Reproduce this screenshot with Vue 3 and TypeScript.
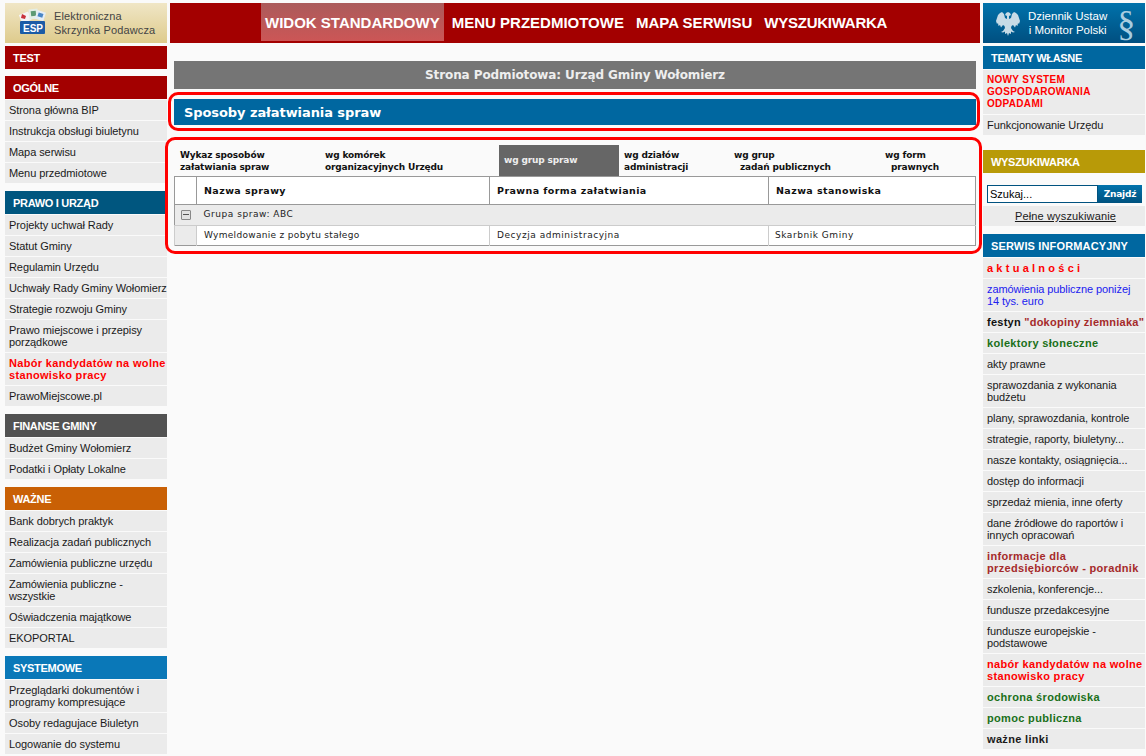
<script setup lang="ts">
interface Item { text: string; cls?: string }
interface Section { title: string; color: string; items: Item[] }

const leftSections: Section[] = [
  { title: 'TEST', color: '#a30000', items: [] },
  { title: 'OGÓLNE', color: '#a30000', items: [
    { text: 'Strona główna BIP' }, { text: 'Instrukcja obsługi biuletynu' }, { text: 'Mapa serwisu' }, { text: 'Menu przedmiotowe' },
  ] },
  { title: 'PRAWO I URZĄD', color: '#00567f', items: [
    { text: 'Projekty uchwał Rady' }, { text: 'Statut Gminy' }, { text: 'Regulamin Urzędu' }, { text: 'Uchwały Rady Gminy Wołomierz' },
    { text: 'Strategie rozwoju Gminy' }, { text: 'Prawo miejscowe i przepisy porządkowe' },
    { text: 'Nabór kandydatów na wolne stanowisko pracy', cls: 'red bold' }, { text: 'PrawoMiejscowe.pl' },
  ] },
  { title: 'FINANSE GMINY', color: '#525252', items: [
    { text: 'Budżet Gminy Wołomierz' }, { text: 'Podatki i Opłaty Lokalne' },
  ] },
  { title: 'WAŻNE', color: '#c96005', items: [
    { text: 'Bank dobrych praktyk' }, { text: 'Realizacja zadań publicznych' }, { text: 'Zamówienia publiczne urzędu' },
    { text: 'Zamówienia publiczne - wszystkie' }, { text: 'Oświadczenia majątkowe' }, { text: 'EKOPORTAL' },
  ] },
  { title: 'SYSTEMOWE', color: '#0a78b8', items: [
    { text: 'Przeglądarki dokumentów i programy kompresujące' }, { text: 'Osoby redagujace Biuletyn' }, { text: 'Logowanie do systemu' },
  ] },
]

const infoItems: Item[] = [
  { text: 'a k t u a l n o ś c i', cls: 'red bold spaced' },
  { text: 'zamówienia publiczne poniżej 14 tys. euro', cls: 'blue' },
  { text: 'festyn', cls: 'bold festyn' },
  { text: 'kolektory słoneczne', cls: 'green bold' },
  { text: 'akty prawne' },
  { text: 'sprawozdania z wykonania budżetu' },
  { text: 'plany, sprawozdania, kontrole' },
  { text: 'strategie, raporty, biuletyny...' },
  { text: 'nasze kontakty, osiągnięcia...' },
  { text: 'dostęp do informacji' },
  { text: 'sprzedaż mienia, inne oferty' },
  { text: 'dane źródłowe do raportów i innych opracowań' },
  { text: 'informacje dla przedsiębiorców - poradnik', cls: 'brown bold' },
  { text: 'szkolenia, konferencje...' },
  { text: 'fundusze przedakcesyjne' },
  { text: 'fundusze europejskie - podstawowe' },
  { text: 'nabór kandydatów na wolne stanowisko pracy', cls: 'red bold' },
  { text: 'ochrona środowiska', cls: 'green bold' },
  { text: 'pomoc publiczna', cls: 'green bold' },
  { text: 'ważne linki', cls: 'bold' },
]

const nav = ['WIDOK STANDARDOWY', 'MENU PRZEDMIOTOWE', 'MAPA SERWISU', 'WYSZUKIWARKA']
const tabs = [
  { lines: ['Wykaz sposobów', 'załatwiania spraw'], w: 145, pad: 6 },
  { lines: ['wg komórek', 'organizacyjnych Urzędu'], w: 180, pad: 6 },
  { lines: ['wg grup spraw'], w: 120, pad: 5, active: true },
  { lines: ['wg działów', 'administracji'], w: 110, pad: 5 },
  { lines: ['wg grup', '\u00a0 zadań publicznych'], w: 150, pad: 5 },
  { lines: ['wg form', '\u00a0 prawnych'], w: 97, pad: 6 },
]
const eagleHalf = 'M13 2L11 3L10 5L12 6L12 9L10 8L9 4L7 2L5 3L3 5L2 8L1 11L2 14L3 13L3.5 16L5 15L6 17.5L8 15L9.5 16L10 18L8 21L6 22L8 22.5L10 21.5L10 24L12 23L13 26Z'
</script>

<template>
  <div class="page">
    <aside class="side">
      <div class="esp">
        <svg class="esp-logo" width="27" height="26" viewBox="0 0 27 26">
          <rect x="1" y="5" width="10" height="9" fill="#f4f4f4" transform="rotate(-22 6 9)" />
          <path d="M3 6l4 2-1 3-4-1z" fill="#c8323a" />
          <rect x="10" y="1" width="9" height="10" fill="#e4eee6" transform="rotate(-6 14 6)" />
          <rect x="12" y="3" width="5" height="5" fill="#5d9a74" transform="rotate(-6 14 6)" />
          <rect x="17" y="3" width="9" height="9" fill="#e4edf6" transform="rotate(18 21 7)" />
          <rect x="19" y="5" width="5" height="4" fill="#4a86c6" transform="rotate(18 21 7)" />
          <rect x="1" y="13" width="25" height="13" rx="1" fill="#1c5ca6" />
          <text x="14" y="23.5" class="esp-text" text-anchor="middle">ESP</text>
        </svg>
        <div class="esp-label">Elektroniczna<br />Skrzynka Podawcza</div>
      </div>
      <section v-for="s in leftSections" :key="s.title" class="box">
        <h3 class="box-title" :style="{ background: s.color }">{{ s.title }}</h3>
        <a v-for="i in s.items" :key="i.text" class="item" :class="i.cls">{{ i.text }}</a>
      </section>
    </aside>

    <main class="center">
      <nav class="topnav">
        <a v-for="(n, idx) in nav" :key="n" class="nav-link" :class="{ on: idx === 0 }">{{ n }}</a>
      </nav>
      <div class="content">
        <div class="subject">Strona Podmiotowa: Urząd Gminy Wołomierz</div>
        <h1 class="heading">Sposoby załatwiania spraw</h1>
        <div class="tabs">
          <div
            v-for="t in tabs"
            :key="t.lines[0]"
            class="tab"
            :class="{ active: t.active }"
            :style="{ width: t.w + 'px', paddingLeft: t.pad + 'px' }"
          >
            <div v-for="l in t.lines" :key="l">{{ l }}</div>
          </div>
        </div>
        <table class="grid">
          <colgroup>
            <col style="width: 22px" />
            <col style="width: 293px" />
            <col style="width: 279px" />
            <col />
          </colgroup>
          <thead>
            <tr>
              <th></th>
              <th>Nazwa sprawy</th>
              <th>Prawna forma załatwiania</th>
              <th>Nazwa stanowiska</th>
            </tr>
          </thead>
          <tbody>
            <tr class="group">
              <td><span class="minus"></span></td>
              <td colspan="3">Grupa spraw: ABC</td>
            </tr>
            <tr class="row">
              <td class="gutter"></td>
              <td class="name">Wymeldowanie z pobytu stałego</td>
              <td>Decyzja administracyjna</td>
              <td class="post">Skarbnik Gminy</td>
            </tr>
          </tbody>
        </table>
        <div class="frame frame-a"></div>
        <div class="frame frame-b"></div>
      </div>
    </main>

    <aside class="side right">
      <div class="dz">
        <svg class="eagle" width="26" height="26" viewBox="0 0 26 26">
          <path :d="eagleHalf" fill="#c7dbe6" />
          <path :d="eagleHalf" fill="#c7dbe6" transform="translate(26 0) scale(-1 1)" />
        </svg>
        <div class="dz-label">Dziennik Ustaw<br />i Monitor Polski</div>
        <span class="para">§</span>
      </div>
      <section class="box topics">
        <h3 class="box-title" style="background: #0067a0">TEMATY WŁASNE</h3>
        <a class="item red caps">NOWY SYSTEM GOSPODAROWANIA ODPADAMI</a>
        <a class="item">Funkcjonowanie Urzędu</a>
      </section>
      <section class="box">
        <h3 class="box-title" style="background: #b89a08">WYSZUKIWARKA</h3>
        <form class="search" @submit.prevent>
          <input class="search-input" value="Szukaj..." />
          <button class="search-btn">Znajdź</button>
        </form>
        <a class="full-search">Pełne wyszukiwanie</a>
      </section>
      <section class="box">
        <h3 class="box-title wide" style="background: #0067a0">SERWIS INFORMACYJNY</h3>
        <a v-for="i in infoItems" :key="i.text" class="item" :class="i.cls">
          {{ i.text }}<span v-if="i.text === 'festyn'" class="festyn-rest"> "dokopiny ziemniaka"</span>
        </a>
      </section>
    </aside>
  </div>
</template>

<style>
html, body {
  margin: 0;
  background: #fafafa;
}
</style>

<style scoped>
.page {
  display: flex;
  width: 1146px;
  height: 756px;
  overflow: hidden;
  padding-top: 3px;
  box-sizing: border-box;
  font-family: "Liberation Sans", Arial, sans-serif;
  font-size: 11px;
  color: #1a1a1a;
}
.side {
  width: 162px;
  margin-left: 5px;
  flex: none;
}
.side.right {
  margin-left: 3px;
}
.center {
  width: 810px;
  margin-left: 3px;
  flex: none;
}

.esp {
  height: 40px;
  display: flex;
  align-items: center;
  background: linear-gradient(#f0e6c6, #decb8c);
  margin-bottom: 3px;
}
.esp-logo {
  margin-left: 14px;
  margin-bottom: 4px;
}
.esp-label {
  margin-left: 8px;
  font-size: 11px;
  line-height: 14px;
  letter-spacing: 0.13px;
  color: #444;
}
.esp-text {
  font-family: "Liberation Sans", sans-serif;
  font-size: 10px;
  font-weight: bold;
  fill: #fff;
}

.dz {
  height: 40px;
  margin-bottom: 3px;
  display: flex;
  align-items: center;
  background: linear-gradient(#0072ab, #004f80);
  color: #fff;
}
.eagle { margin-left: 12px; }
.dz-label {
  margin-left: 7px;
  font-size: 11.5px;
  line-height: 14px;
  text-align: center;
}
.para {
  margin-left: 10px;
  font-family: "Liberation Serif", serif;
  font-size: 36px;
  line-height: 34px;
  align-self: flex-start;
  margin-top: 3px;
  color: #a9cde0;
}

.box { margin-bottom: 8px; }
.box:nth-of-type(1) { margin-bottom: 7px; }
.side.right .box { margin-bottom: 8px; }
.side.right .topics { margin-bottom: 15px; }
.box-title {
  margin: 0;
  height: 23px;
  line-height: 24px;
  padding-left: 8px;
  font-size: 11px;
  font-weight: bold;
  letter-spacing: -0.3px;
  color: #fff;
}
.box-title.wide { letter-spacing: 0.15px; }
.item {
  display: block;
  background: #ebebeb;
  padding: 4px 0 4px 4px;
  margin-top: 1px;
  font-size: 11px;
  line-height: 12px;
  letter-spacing: -0.08px;
  color: #1a1a1a;
}
.item.red { color: #f00; }
.item.blue { color: #2020f0; }
.item.bold { font-weight: bold; letter-spacing: 0.33px; }
.item.spaced { letter-spacing: 0.1px; }
.item.caps { font-size: 10px; font-weight: bold; letter-spacing: 0.3px; }
.item.green { color: #1a701a; }
.item.brown { color: #a52a2a; }
.item.festyn { letter-spacing: 0.25px; color: #111; }
.festyn-rest { color: #a52a2a; }

.topnav {
  height: 40px;
  background: #a30000;
  display: flex;
  gap: 12px;
  padding-left: 91px;
}
.nav-link {
  font-size: 15px;
  line-height: 40px;
  color: #fff;
  font-weight: bold;
  height: 38px;
}
.nav-link:last-child { letter-spacing: -0.25px; }
.nav-link.on {
  background: linear-gradient(#ab5b5b, #cc5656);
  padding: 0 4px;
  margin-right: -4px;
}

.content {
  position: relative;
  padding: 18px 4px 0;
}
.subject {
  height: 28px;
  line-height: 29px;
  background: #757575;
  color: #eee;
  text-align: center;
  font-family: "DejaVu Sans", Verdana, sans-serif;
  font-size: 12px;
  font-weight: bold;
  letter-spacing: -0.1px;
}
.heading {
  margin: 10px 0 0;
  height: 26px;
  line-height: 28px;
  background: #0067a0;
  color: #fff;
  padding-left: 10px;
  font-family: "DejaVu Sans", Verdana, sans-serif;
  font-size: 13px;
  font-weight: bold;
  letter-spacing: -0.08px;
}
.tabs {
  display: flex;
  height: 31px;
  margin-top: 20px;
  font-family: "DejaVu Sans", Verdana, sans-serif;
  font-size: 9px;
  font-weight: bold;
  line-height: 12px;
  letter-spacing: -0.15px;
  color: #111;
}
.tab {
  box-sizing: border-box;
  padding-top: 4px;
}
.tab.active {
  background: #666;
  color: #eee;
  padding-top: 9px;
}
.grid {
  width: 802px;
  table-layout: fixed;
  border-collapse: collapse;
  background: #fff;
  font-family: "DejaVu Sans", Verdana, sans-serif;
  font-size: 9px;
  letter-spacing: 0.54px;
  color: #222;
}
.grid th {
  height: 27px;
  padding: 0 7px;
  text-align: left;
  font-size: 9.5px;
  letter-spacing: 0.42px;
  color: #111;
  border: 1px solid #999;
}
.grid td {
  padding: 0 7px 2px;
  border-top: 1px solid #ccc;
  border-left: 1px solid #ccc;
  height: 17px;
}
.grid td.name { letter-spacing: 0.31px; }
.grid td.post { padding-left: 6px; }
.group td {
  background: #ebebeb;
  border-left: none;
}
.grid .group td { height: 18px; }
.group td:first-child, .gutter {
  background: #ebebeb;
  padding: 0 !important;
}
.grid tbody { border: 1px solid #999; }
.minus {
  display: block;
  width: 8px;
  height: 8px;
  margin-left: 6px;
  border: 1px solid #888;
  border-radius: 1px;
  background: #e2e2e2;
  position: relative;
}
.minus::after {
  content: "";
  position: absolute;
  left: 1px;
  right: 1px;
  top: 3px;
  height: 1px;
  background: #555;
}

.frame {
  position: absolute;
  box-sizing: border-box;
  border: 3px solid #f00;
  border-radius: 10px;
  pointer-events: none;
}
.frame-a { left: -2px; top: 49px; width: 812px; height: 39px; }
.frame-b { left: -5px; top: 94px; width: 817px; height: 117px; }

.search {
  display: flex;
  padding: 12px 0 0 4px;
  height: 18px;
}
.search-input {
  box-sizing: border-box;
  width: 111px;
  height: 18px;
  border: 1px solid #00527f;
  padding: 0 2px;
  margin: 0;
  font-family: inherit;
  font-size: 11px;
  background: #fff;
  outline: none;
}
.search-btn {
  box-sizing: border-box;
  width: 44px;
  height: 18px;
  border: none;
  background: linear-gradient(#0072ab, #00527f);
  color: #fff;
  font-family: "DejaVu Sans", sans-serif;
  font-size: 9px;
  font-weight: bold;
  letter-spacing: -0.2px;
  padding: 0;
}
.full-search {
  display: block;
  background: #ebebeb;
  text-align: center;
  text-decoration: underline;
  height: 20px;
  line-height: 21px;
  margin-top: 3px;
  padding-left: 3px;
  font-size: 11px;
  letter-spacing: 0.15px;
}
</style>
